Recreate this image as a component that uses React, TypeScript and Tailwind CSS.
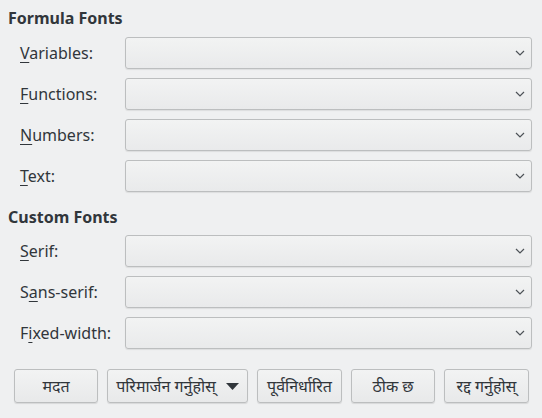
import React from "react";

type Row = { pre: string; key: string; post: string };

const formulaRows: Row[] = [
  { pre: "", key: "V", post: "ariables:" },
  { pre: "", key: "F", post: "unctions:" },
  { pre: "", key: "N", post: "umbers:" },
  { pre: "", key: "T", post: "ext:" },
];

const customRows: Row[] = [
  { pre: "", key: "S", post: "erif:" },
  { pre: "S", key: "a", post: "ns-serif:" },
  { pre: "F", key: "i", post: "xed-width:" },
];

function Chevron() {
  return (
    <svg width="10" height="6" viewBox="0 0 10 6" className="text-[#4d5257]">
      <path d="M1 1 L5 5 L9 1" fill="none" stroke="currentColor" strokeWidth="1.2" />
    </svg>
  );
}

function FontRow({ row }: { row: Row }) {
  return (
    <div className="flex items-center h-[32px]">
      <div className="w-[117px] pl-[12px] text-[16px] text-[#31363b]">
        {row.pre}
        <u className="underline-offset-[3px]">{row.key}</u>
        {row.post}
      </div>
      <div className="flex-1 h-full flex items-center justify-end pr-[6px] rounded-[3px] border border-[#bcbebf] bg-gradient-to-b from-[#f2f3f3] to-[#e9eaeb] shadow-[0_1px_1px_rgba(0,0,0,0.08)]">
        <Chevron />
      </div>
    </div>
  );
}

function Heading({ children, className }: { children: string; className?: string }) {
  return (
    <div className={"h-[20px] flex items-center text-[16px] font-bold text-[#31363b] " + (className ?? "")}>
      {children}
    </div>
  );
}

function Btn({ children, w }: { children: React.ReactNode; w: string }) {
  return (
    <button
      type="button"
      className={
        "h-[34px] flex items-center justify-center gap-[10px] rounded-[3px] border border-[#bcbebf] bg-gradient-to-b from-[#f2f3f3] to-[#e8e9ea] text-[16px] text-[#31363b] shadow-[0_1px_1px_rgba(0,0,0,0.1)] " +
        w
      }
    >
      {children}
    </button>
  );
}

export default function App() {
  return (
    <div
      className="w-[542px] h-[418px] bg-[#eff0f1] pl-[8px] pr-[10px] pt-[8px] overflow-hidden"
      style={{ fontFamily: "'Noto Sans', 'Open Sans', 'DejaVu Sans', sans-serif" }}
    >
      <Heading className="mb-[9px]">Formula Fonts</Heading>
      <div className="flex flex-col gap-[9px]">
        {formulaRows.map((r) => (
          <FontRow key={r.post} row={r} />
        ))}
      </div>
      <Heading className="mt-[15px] mb-[8px]">Custom Fonts</Heading>
      <div className="flex flex-col gap-[9px]">
        {customRows.map((r) => (
          <FontRow key={r.post} row={r} />
        ))}
      </div>
      <div className="mt-[20px] pl-[6px] flex gap-[9px]">
        <Btn w="w-[84px]">मदत</Btn>
        <Btn w="w-[141px]">
          <span>परिमार्जन गर्नुहोस्</span>
          <svg width="13" height="7" viewBox="0 0 13 7">
            <path d="M0 0 H13 L6.5 7 Z" fill="#31363b" />
          </svg>
        </Btn>
        <Btn w="w-[85px]">पूर्वनिर्धारित</Btn>
        <Btn w="w-[84px]">ठीक छ</Btn>
        <Btn w="w-[85px]">रद्द गर्नुहोस्</Btn>
      </div>
    </div>
  );
}
